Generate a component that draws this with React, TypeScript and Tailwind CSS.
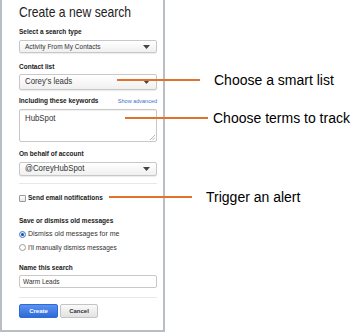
import React from "react";

const regular = { fontFamily: '"Liberation Sans", Arial, sans-serif' };

// squeezes a single line of text horizontally, the reference uses a narrow face
const Squeeze = ({ children, className = "" }: { children: React.ReactNode; className?: string }) => (
  <span className={`inline-block origin-left whitespace-nowrap ${className}`}>{children}</span>
);

const Caret = () => (
  <svg width="7" height="4" viewBox="0 0 7 4" className="absolute right-[6px] top-1/2 -translate-y-1/2">
    <path d="M0 0 L7 0 L3.5 4 Z" fill="#444" />
  </svg>
);

const FakeSelect = ({ children, className }: { children: React.ReactNode; className: string }) => (
  <div
    className={`relative w-[138px] border border-[#c8c8c8] rounded-[2px] bg-gradient-to-b from-white to-[#f0f0f0] shadow-[0_1px_1px_rgba(0,0,0,0.08)] flex items-center pl-[5px] text-[#333] whitespace-nowrap overflow-hidden ${className}`}
  >
    {children}
    <Caret />
  </div>
);

const Label = ({ children, className = "" }: { children: React.ReactNode; className?: string }) => (
  <div className={`text-[6.5px] leading-[10px] font-bold text-[#1a1a1a] whitespace-nowrap ${className}`}>{children}</div>
);

const Callout = ({ top, from, to, label, textLeft }: { top: number; from: number; to: number; label: string; textLeft: number }) => (
  <>
    <div className="absolute h-[2px] bg-[#e2712a]" style={{ top: top - 1, left: from, width: to - from }} />
    <div className="absolute text-[14px] leading-[16px] text-black whitespace-nowrap" style={{ top: top - 8, left: textLeft }}>
      {label}
    </div>
  </>
);

export default function App() {
  return (
    <div className="relative w-[359px] h-[333px] bg-white overflow-hidden" style={regular}>
      <div className="w-[165px] h-[332px] border-l-2 border-r-2 border-b-2 border-[#b9bec4] pl-[17px] pt-[2px]">
        <div className="text-[15px] leading-[20px] text-[#222]">
          <Squeeze className="scale-x-[0.81]">Create a new search</Squeeze>
        </div>

        <Label className="mt-[5px]">Select a search type</Label>
        <FakeSelect className="mt-[3px] h-[13px]">
          <span className="text-[6.5px]">Activity From My Contacts</span>
        </FakeSelect>

        <Label className="mt-[9px]">Contact list</Label>
        <FakeSelect className="mt-[2px] h-[16px]">
          <Squeeze className="text-[9px] scale-x-[0.87]">Corey's leads</Squeeze>
        </FakeSelect>

        <div className="mt-[6px] w-[138px] flex justify-between items-center">
          <Label>Including these keywords</Label>
          <span className="text-[5.5px] leading-[10px] text-[#3a6fd0] whitespace-nowrap">Show advanced</span>
        </div>
        <div className="relative mt-[3px] w-[138px] h-[33px] border border-[#c8c8c8] rounded-[2px] bg-white pl-[5px] pt-[2px] text-[9px] leading-[13px] text-[#333] shadow-[inset_0_1px_1px_rgba(0,0,0,0.06)]">
          <Squeeze className="scale-x-[0.87]">HubSpot</Squeeze>
          <svg width="5" height="5" viewBox="0 0 5 5" className="absolute right-[1px] bottom-[1px]">
            <path d="M5 0 L0 5 M5 2.5 L2.5 5" stroke="#999" strokeWidth="0.7" />
          </svg>
        </div>

        <Label className="mt-[7px]">On behalf of account</Label>
        <FakeSelect className="mt-[3px] h-[14px]">
          <Squeeze className="text-[9px] scale-x-[0.87]">@CoreyHubSpot</Squeeze>
        </FakeSelect>

        <div className="mt-[7px] w-[138px] h-px bg-[#e8e8e8]" />

        <div className="mt-[9px] flex items-center gap-[2px] h-[10px]">
          <span className="w-[7px] h-[7px] border border-[#9a9a9a] rounded-[1px] bg-gradient-to-b from-white to-[#e6e6e6]" />
          <span className="text-[6.5px] font-bold text-[#1a1a1a] whitespace-nowrap">Send email notifications</span>
        </div>

        <Label className="mt-[13px]">Save or dismiss old messages</Label>
        <div className="mt-[3px] flex items-center gap-[2px] h-[11px]">
          <span className="w-[7px] h-[7px] rounded-full border border-[#4a7fc8] bg-[#dbe8f8] flex items-center justify-center">
            <span className="w-[3px] h-[3px] rounded-full bg-[#1d4f9a]" />
          </span>
          <span className="text-[7px] text-[#333] whitespace-nowrap">Dismiss old messages for me</span>
        </div>
        <div className="mt-[2px] flex items-center gap-[2px] h-[11px]">
          <span className="w-[7px] h-[7px] rounded-full border border-[#9a9a9a] bg-white" />
          <span className="text-[6.5px] text-[#333] whitespace-nowrap">I'll manually dismiss messages</span>
        </div>

        <Label className="mt-[10px]">Name this search</Label>
        <div className="mt-[2px] w-[138px] h-[13px] border border-[#c8c8c8] rounded-[2px] bg-white pl-[3px] flex items-center text-[6.5px] text-[#333]">
          Warm Leads
        </div>

        <div className="mt-[9px] w-[138px] h-px bg-[#e8e8e8]" />

        <div className="mt-[6px] flex gap-[2px]">
          <button className="w-[39px] h-[14px] rounded-[2px] border border-[#2f6ad8] bg-gradient-to-b from-[#5a93f0] to-[#2f6ad8] text-white text-[6px] font-bold leading-none">
            Create
          </button>
          <button className="w-[38px] h-[14px] rounded-[2px] border border-[#c4c4c4] bg-gradient-to-b from-[#fafafa] to-[#e2e2e2] text-[#333] text-[6px] font-bold leading-none">
            Cancel
          </button>
        </div>
      </div>

      <Callout top={80} from={117} to={200} label="Choose a smart list" textLeft={214} />
      <Callout top={118} from={125} to={208} label="Choose terms to track" textLeft={213} />
      <Callout top={197} from={109} to={192} label="Trigger an alert" textLeft={206} />
    </div>
  );
}
